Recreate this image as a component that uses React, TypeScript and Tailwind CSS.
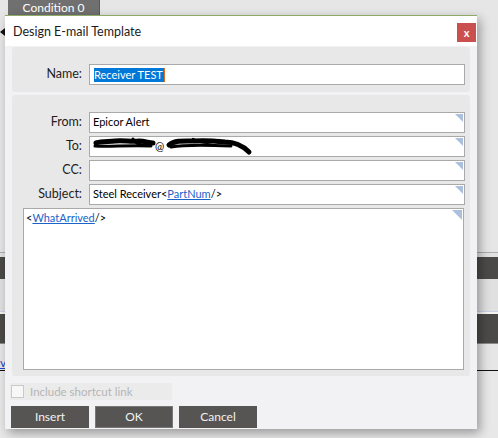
import React from 'react';

const font = "font-['Lato',sans-serif]";

// small blue triangle the app draws in the top-right of each editable box
const Corner = ({ size = 8 }: { size?: number }) => (
  <svg className="absolute top-px right-px" width={size} height={size}>
    <polygon points={`0,0 ${size},0 ${size},${size}`} fill="#abc0dd" />
  </svg>
);

interface FieldProps {
  label: string;
  children?: React.ReactNode;
}

const Field: React.FC<FieldProps> = ({ label, children }) => (
  <div className="flex items-center h-[21px]">
    <label className="w-[77px] pr-[7px] text-right text-[12.5px] text-[#1e1e1e]">{label}</label>
    <div className="relative flex-1 h-full bg-white border border-[#a9a9a9] flex items-center pl-[3px] text-[11px] text-black whitespace-nowrap">
      {children}
      <Corner />
    </div>
  </div>
);

// blacked-out address in the To: box
const Scribble = () => (
  <svg width="162" height="19" viewBox="0 0 162 19" className="absolute left-0 top-0">
    <path
      d="M3 6 C10 4 16 5 22 4 C30 3 38 5 46 4 C52 4 56 6 60 6"
      stroke="#000"
      strokeWidth="5"
      fill="none"
      strokeLinecap="round"
    />
    <path d="M2 9 C16 10 34 8 58 9" stroke="#000" strokeWidth="3" fill="none" strokeLinecap="round" />
    <path d="M40 2 C44 8 50 9 56 7" stroke="#000" strokeWidth="3" fill="none" strokeLinecap="round" />
    <path
      d="M76 8 C82 3 92 4 102 4 C112 3 122 4 132 5 C140 5 148 7 156 15"
      stroke="#000"
      strokeWidth="5"
      fill="none"
      strokeLinecap="round"
    />
    <path d="M78 10 C94 7 116 8 138 9" stroke="#000" strokeWidth="3" fill="none" strokeLinecap="round" />
    <path d="M100 2 C108 6 118 7 126 3" stroke="#000" strokeWidth="2.5" fill="none" strokeLinecap="round" />
  </svg>
);

export default function App() {
  return (
    <div className={`relative w-[498px] h-[438px] overflow-hidden bg-[#e6e6e6] ${font}`}>
      {/* background window */}
      <div className="flex flex-col w-full h-full">
        <div className="ml-[8px] w-[92px] h-[15px] bg-[#707070] border-r border-[#5a5a5a] flex items-center justify-center text-[12px] text-white leading-none">
          Condition 0
        </div>
        <div className="h-[13px]" />
        <div className="w-0 h-0 border-y-[4px] border-y-transparent border-r-[5px] border-r-[#111]" />
        <div className="h-[216px]" />
        <div className="h-px bg-[#acacac]" />
        <div className="h-[4px] bg-[#e2e2e2]" />
        <div className="h-[22px] bg-[#4b4a49]" />
        <div className="h-[32px] bg-[#e0e0e0]" />
        <div className="h-px bg-[#c9d1e2]" />
        <div className="h-[2px] bg-[#f4f4f4]" />
        <div className="h-[30px] bg-[#4b4a49] border-b border-[#8a8a8a]" />
        <div className="h-[26px] bg-[#e6e6e6] flex items-end">
          <span className="text-[12px] leading-[14px] text-[#2244cc] underline">vr</span>
        </div>
        <div className="h-px bg-[#111]" />
        <div className="flex-1 bg-[#e8e8e8]" />
      </div>

      {/* dialog */}
      <div className="absolute left-[5px] top-[15px] w-[472px] h-[414px] bg-[#f2f2f4] border-t border-[#8eab66] shadow-[3px_4px_10px_rgba(0,0,0,0.35)] flex flex-col">
        <div className="h-[30px] bg-white flex items-start justify-between">
          <span className="ml-[8px] mt-[7px] text-[12.5px] text-[#1b1b1b]">Design E-mail Template</span>
          <button className="mt-[7px] mr-px w-[19px] h-[19px] bg-[#c9504f] text-white text-[11px] font-bold leading-none flex items-center justify-center">
            x
          </button>
        </div>

        <div className="px-[7px] pt-px">
          <div className="bg-[#e8e8e8] rounded-[3px] pt-[17px] pb-[7px] pr-[5px]">
            <div className="flex items-center h-[21px]">
              <label className="w-[77px] pr-[7px] text-right text-[12.5px] text-[#1e1e1e]">Name:</label>
              <div className="flex-1 h-full bg-white border border-[#a9a9a9] flex items-center pl-[4px] text-[11px]">
                <span className="bg-[#0078d7] text-white leading-[14px] pr-px">Receiver TEST</span>
                <span className="w-px h-[14px] bg-[#e07020]" />
              </div>
            </div>
          </div>

          <div className="mt-[3px] bg-[#e8e8e8] rounded-[3px] pt-[17px] pb-[6px] pr-[5px] flex flex-col gap-[3px]">
            <Field label="From:">Epicor Alert</Field>
            <Field label="To:">
              <div className="relative w-[162px] h-full">
                <Scribble />
                <span className="absolute left-[62px] top-[2px] text-[11px] leading-[14px]">@</span>
              </div>
            </Field>
            <Field label="CC:" />
            <Field label="Subject:">
              Steel Receiver&lt;<span className="text-[#1c62c8] underline">PartNum</span>/&gt;
            </Field>
            <div className="relative ml-[11px] mr-px h-[162px] bg-white border border-[#a9a9a9] pl-[2px] pt-[2px] text-[11px] leading-[14px]">
              &lt;<span className="text-[#1c62c8] underline">WhatArrived</span>/&gt;
              <Corner size={10} />
            </div>
          </div>
        </div>

        <div className="mt-[7px] ml-[5px] w-[162px] h-[17px] bg-[#ebebec] flex items-center">
          <span className="ml-[1px] w-[13px] h-[13px] border border-[#cacaca] bg-[#f7f7f7]" />
          <span className="ml-[6px] text-[11.5px] text-[#b5b5b5]">Include shortcut link</span>
        </div>

        <div className="mt-[6px] ml-[6px] flex gap-[6px]">
          <button className="w-[78px] h-[22px] bg-[#575553] border border-[#575553] text-[12px] text-[#f2f2f2]">Insert</button>
          <button className="w-[78px] h-[22px] bg-[#575553] border border-[#777777] text-[12px] text-[#f2f2f2]">OK</button>
          <button className="w-[78px] h-[22px] bg-[#575553] border border-[#575553] text-[12px] text-[#f2f2f2]">Cancel</button>
        </div>
      </div>
    </div>
  );
}
